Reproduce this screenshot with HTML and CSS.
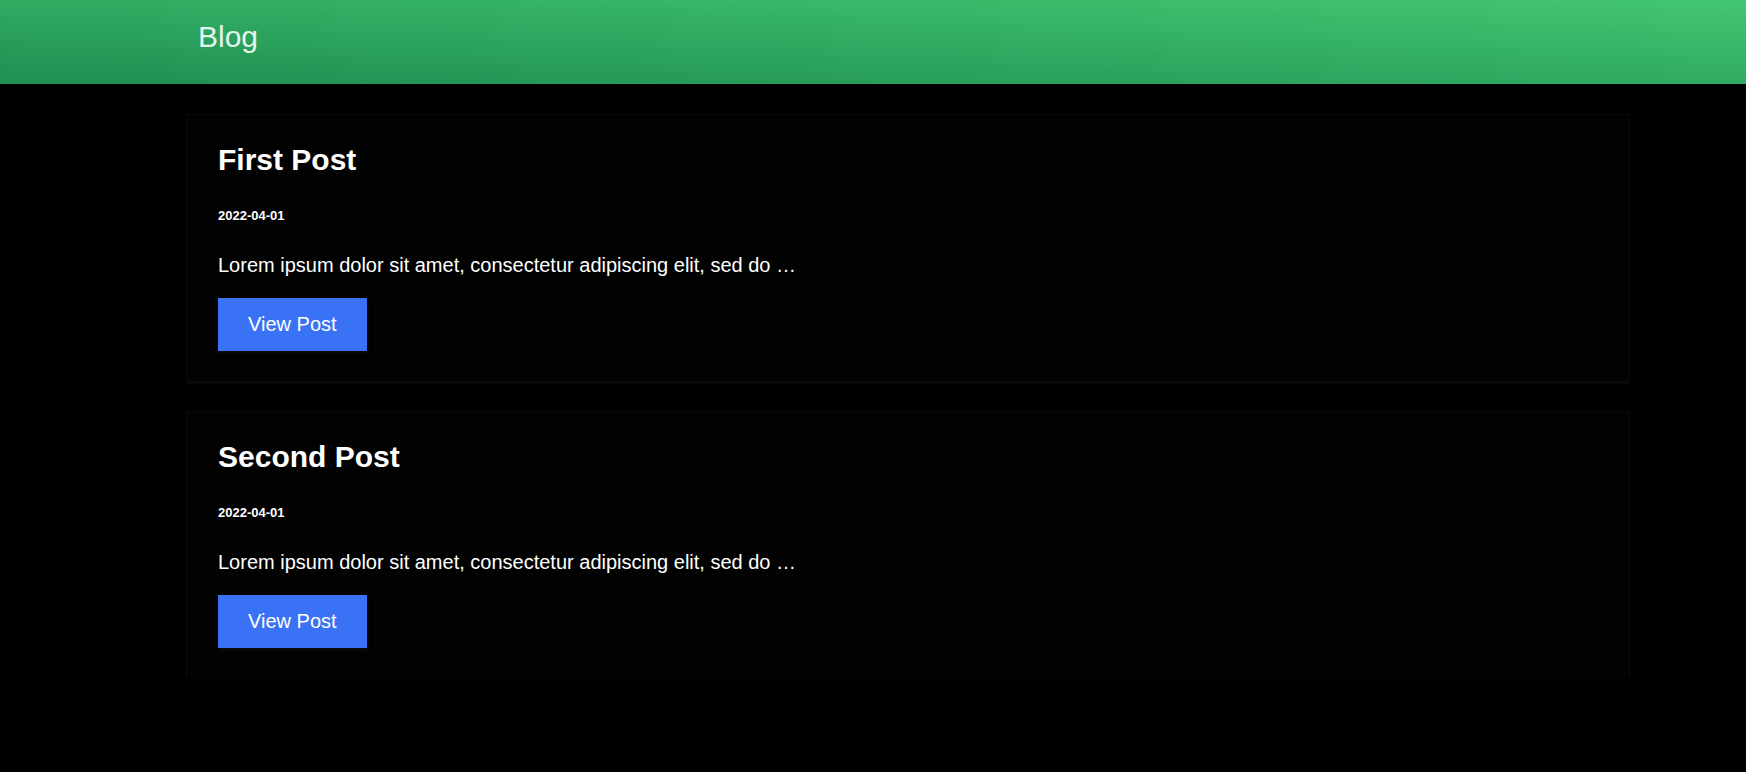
FILE: index.html
```html
<!DOCTYPE html>
<html lang="en">
<head>
<meta charset="utf-8">
<title>Blog</title>
<link rel="stylesheet" href="styles.css">
</head>
<body>
<header class="topbar">
  <div class="topbar-inner">
    <span class="brand">Blog</span>
  </div>
</header>
<main class="posts">
  <article class="card">
    <h2 class="card-title">First Post</h2>
    <div class="card-date">2022-04-01</div>
    <p class="card-excerpt">Lorem ipsum dolor sit amet, consectetur adipiscing elit, sed do …</p>
    <a class="btn" href="#">View Post</a>
  </article>
  <article class="card">
    <h2 class="card-title">Second Post</h2>
    <div class="card-date">2022-04-01</div>
    <p class="card-excerpt">Lorem ipsum dolor sit amet, consectetur adipiscing elit, sed do …</p>
    <a class="btn" href="#">View Post</a>
  </article>
</main>
</body>
</html>
```
FILE: styles.css
```css
html, body {
  margin: 0;
  padding: 0;
}
body {
  background: #000;
  color: #fff;
  font-family: "Liberation Sans", Arial, sans-serif;
}
.topbar {
  height: 84px;
  box-sizing: border-box;
  padding-top: 20px;
  background: linear-gradient(to top right, #1e8f51, #43c673);
}
.topbar-inner {
  margin-left: 187px;
  padding-left: 11px;
}
.brand {
  font-size: 30px;
  line-height: 34px;
  color: #e4f5ec;
}
.posts {
  margin: 31px 117px 0 187px;
  display: flex;
  flex-direction: column;
  gap: 31px;
}
.card {
  display: flex;
  flex-direction: column;
  align-items: flex-start;
  padding: 28px 30px 30px 31px;
  background: #020202;
  box-shadow: 0 0 0 1px #08090b, 0 2px 3px #0e1115;
}
.card-title {
  margin: 0 0 31px;
  font-size: 30px;
  line-height: 34px;
  font-weight: 700;
}
.card-date {
  margin-bottom: 31px;
  font-size: 13px;
  line-height: 15px;
  font-weight: 700;
}
.card-excerpt {
  margin: 0 0 21px;
  font-size: 20px;
  line-height: 23px;
}
.btn {
  display: inline-block;
  padding: 15px 30px;
  font-size: 20px;
  line-height: 23px;
  color: #fff;
  text-decoration: none;
  background: #3a72f5;
  box-shadow: 0 2px 4px #0c0f14;
}
```
